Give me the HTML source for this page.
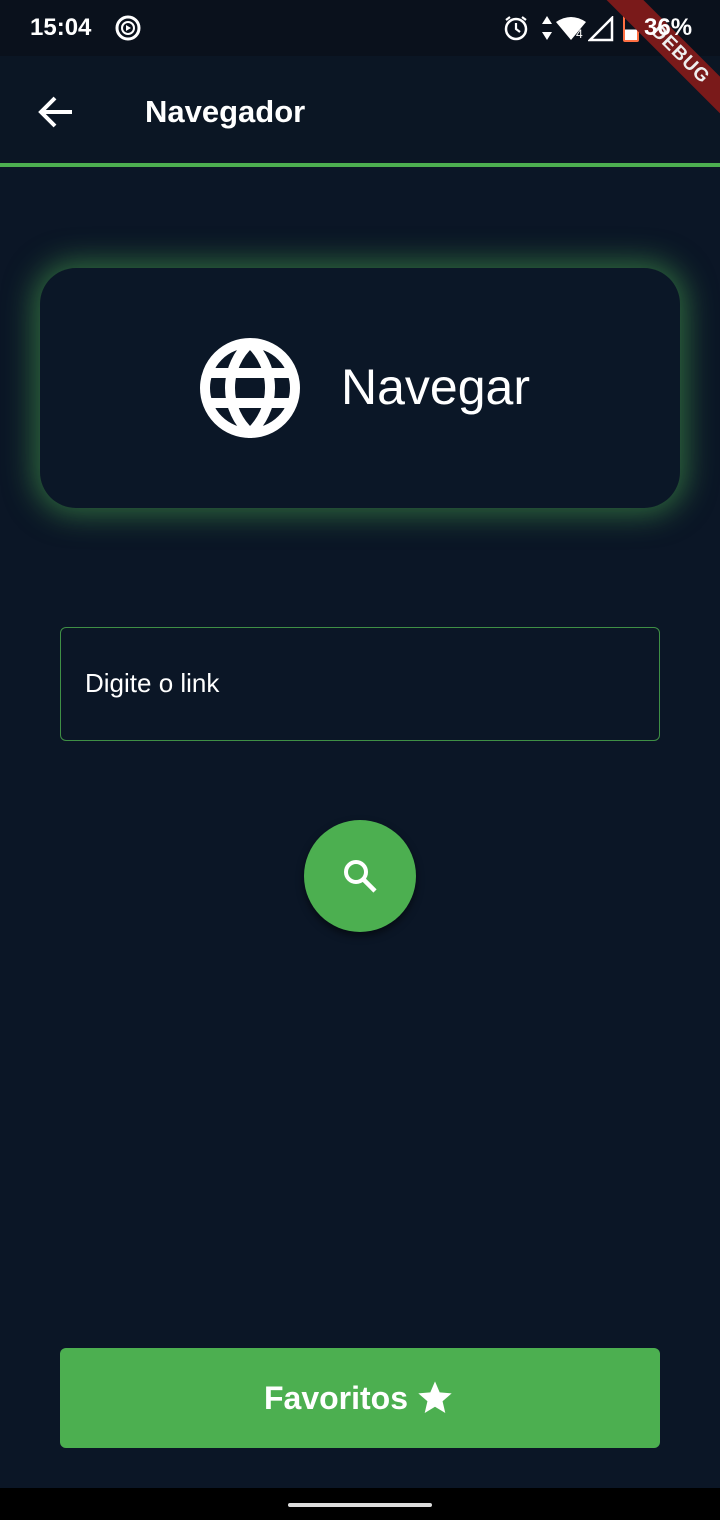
<!DOCTYPE html>
<html><head><meta charset="utf-8"><style>
*{margin:0;padding:0;box-sizing:border-box}
body{width:720px;height:1520px;background:#0b1626;font-family:"Liberation Sans",Roboto,sans-serif;color:#fff;position:relative;overflow:hidden}
.status{position:absolute;top:0;left:0;width:720px;height:56px;background:#0a111c}
.appbar{position:absolute;top:56px;left:0;width:720px;height:108px;background:#0b1624}
.line{position:absolute;top:163px;left:0;width:720px;height:4px;background:#4caf50}
.card{position:absolute;left:40px;top:268px;width:640px;height:240px;border-radius:36px;background:#0b1727;box-shadow:0 0 30px 6px rgba(76,175,80,.55)}
.input{position:absolute;left:60px;top:627px;width:600px;height:114px;border:1.5px solid #3f8f45;border-radius:6px}
.fab{position:absolute;left:304px;top:820px;width:112px;height:112px;border-radius:50%;background:#4caf50;box-shadow:0 4px 8px rgba(0,0,0,.5)}
.btn{position:absolute;left:60px;top:1348px;width:600px;height:100px;background:#4caf50;border-radius:6px;display:flex;align-items:center;justify-content:center;font-size:32px;font-weight:bold}
.nav{position:absolute;top:1488px;left:0;width:720px;height:32px;background:#000}
.pill{position:absolute;left:288px;top:1503px;width:144px;height:4px;border-radius:2px;background:#ddd}
</style></head><body>
<div class="status">
<div style="position:absolute;left:30px;top:14px;font-size:24px;font-weight:bold">15:04</div>
<svg style="position:absolute;left:115px;top:15px" width="26" height="26" viewBox="0 0 26 26"><circle cx="13" cy="13" r="11" fill="none" stroke="#fff" stroke-width="3"/><circle cx="13" cy="13" r="6" fill="none" stroke="#fff" stroke-width="2"/><path d="M11 10l5 3-5 3z" fill="#fff"/></svg>
<svg style="position:absolute;left:502px;top:14px" width="28" height="28" viewBox="0 0 28 28"><circle cx="14" cy="15" r="10" fill="none" stroke="#fff" stroke-width="2.5"/><path d="M14 9v6l4 3M4 6l4-3M24 6l-4-3" stroke="#fff" stroke-width="2.2" fill="none"/></svg>
<svg style="position:absolute;left:540px;top:16px" width="14" height="24"><path d="M7 0l5 8H2zM7 24l5-8H2z" fill="#fff"/></svg>
<svg style="position:absolute;left:556px;top:16px" width="32" height="24"><path d="M0 6Q15-4 30 6L15 24z" fill="#fff"/><text x="20" y="22" font-size="12" fill="#fff">4</text></svg>
<svg style="position:absolute;left:588px;top:16px" width="26" height="26"><path d="M24 2V24H2z" fill="none" stroke="#fff" stroke-width="2.5"/></svg>
<div style="position:absolute;left:623px;top:15px;width:16px;height:27px;border:2px solid #ff7043;border-radius:2px;background:linear-gradient(#0a111c 55%,#fff 55%)"></div>
</div>
<div class="appbar">
<svg style="position:absolute;left:36px;top:38px" width="40" height="36" viewBox="0 0 40 36"><path d="M36 18H6M19 4L5 18l14 14" stroke="#fff" stroke-width="4" fill="none"/></svg>
<div style="position:absolute;left:145px;top:38px;font-size:31px;font-weight:bold">Navegador</div>
</div>
<div style="position:absolute;left:550px;top:42px;width:260px;height:26px;background:#7a1a1a;transform:rotate(45deg);transform-origin:center;color:#eee;font-weight:bold;font-size:19px;text-align:center;line-height:26px;letter-spacing:1px">DEBUG</div>
<div style="position:absolute;left:644px;top:14px;font-size:24px;font-weight:bold">36%</div>
<div class="line"></div>
<div class="card">
<svg style="position:absolute;left:160px;top:70px" width="100" height="100" viewBox="0 0 100 100" fill="none" stroke="#fff" stroke-width="10"><circle cx="50" cy="50" r="45"/><path d="M50 5A60.6 60.6 0 0 0 50 95A60.6 60.6 0 0 0 50 5"/><path d="M5 35H95M5 65H95"/></svg>
<div style="position:absolute;left:301px;top:90px;font-size:50px">Navegar</div>
</div>
<div class="input"><div style="position:absolute;left:24px;top:40px;font-size:26px">Digite o link</div></div>
<div class="fab"><svg style="position:absolute;left:37px;top:37px" width="40" height="40" viewBox="0 0 40 40"><circle cx="15" cy="15" r="10" fill="none" stroke="#fff" stroke-width="4"/><path d="M22 22L34 34" stroke="#fff" stroke-width="4.5"/></svg></div>
<div class="btn">Favoritos<svg style="margin-left:6px" width="42" height="40" viewBox="0 0 24 24"><path d="M12 17.27L18.18 21l-1.64-7.03L22 9.24l-7.19-.61L12 2 9.19 8.63 2 9.24l5.46 4.73L5.82 21z" fill="#fff"/></svg></div>
<div class="nav"></div><div class="pill"></div>
</body></html>
